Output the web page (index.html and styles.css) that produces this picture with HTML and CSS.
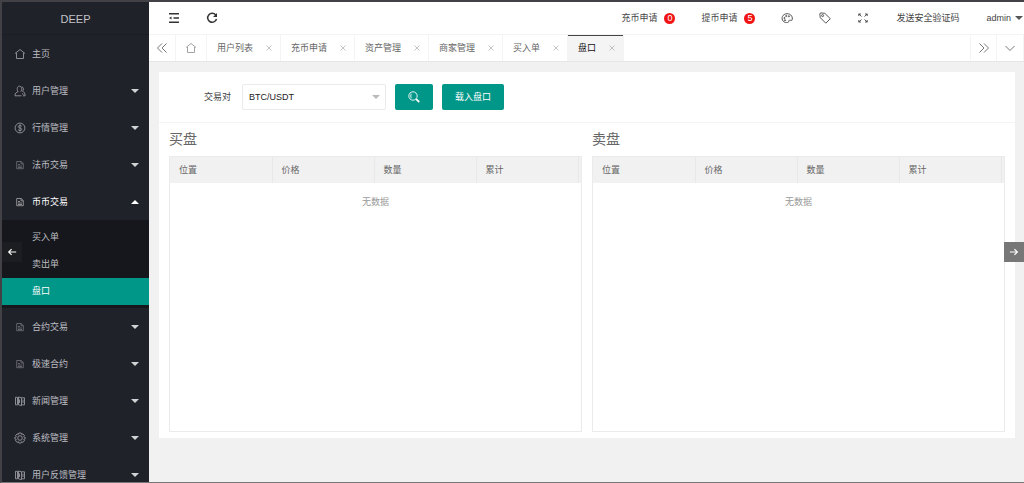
FILE: index.html
```html
<!DOCTYPE html>
<html lang="zh-CN">
<head>
<meta charset="utf-8">
<meta name="viewport" content="width=device-width, initial-scale=1">
<title>DEEP</title>
<link rel="stylesheet" href="styles.css">
</head>
<body>
<svg class="defs" aria-hidden="true">
  <symbol id="home" viewBox="0 0 12 12"><path d="M1 5.500 6 1.500l5 4M2.500 5v5.500h7V5"/></symbol>
  <symbol id="user" viewBox="0 0 12 12"><path d="M4.200 6.700C2.800 5.600 2.600 1.200 5.400 1.200s2.700 4.400 1.200 5.500M4.200 6.700C2.200 7.300 1 8.200 1 10.800h6.500M7.800 1.800c2 .3 2 3.500.7 4.500 1.600.6 2.600 1.700 2.600 4.500H9M8 8.500l1.500 1"/></symbol>
  <symbol id="dollar" viewBox="0 0 12 12"><circle cx="6" cy="6" r="4.900"/><path d="M7.800 4.200C7 3.100 4.300 3.200 4.300 4.700c0 1.600 3.500 1 3.500 2.700 0 1.500-2.800 1.600-3.700.3M6 2.400v7.200"/></symbol>
  <symbol id="doc" viewBox="0 0 12 12"><path d="M2.700 2.500h4.500L9.300 4.500V9.700H2.700zM7 2.500v2.300h2.300M4 5.500h2M4 7h4M4 8.500h4"/></symbol>
  <symbol id="book" viewBox="0 0 12 12"><path d="M1.500 2.300h2v7.500h-2zM4.500 2l3 .8v7.800l-3-.8zM7.500 2.800h3v7h-3M5.500 4.500v3.500M9 4.500v3.500"/></symbol>
  <symbol id="gear" viewBox="0 0 12 12"><path d="M4.800 1h2.400l.4 1.400 1.400-.5 1.500 1.800-.8 1.100 1.500.7v1.400l-1.500.600.8 1.300L8.900 10.300l-1.300-.6L7.200 11H4.800l-.4-1.300-1.300.6-1.600-1.500.8-1.300L.8 6.900V5.500l1.500-.7-.8-1.100L3 1.900l1.400.5z"/><circle cx="6" cy="6" r="2.300"/></symbol>
  <symbol id="fold" viewBox="0 0 12 12"><path d="M1 1.800h10M5.500 6H11M1 10.200h10"/><path class="solid" d="M1 6l2.500-1.500v3z"/></symbol>
  <symbol id="reload" viewBox="0 0 12 12"><path d="M9.700 3A4.500 4.500 0 1 0 10.500 7"/><path class="solid" d="M11 1v4H7z"/></symbol>
  <symbol id="palette" viewBox="0 0 12 12"><path d="M2.500 9.500C-.5 6.500 1.500 1.800 6 1.700c4.200 0 6.200 3.500 5 6.500-.8.7-1.600-.2-2.600 0-1.200.5 0 2-1.700 2.300-1.500.2-3.200-.1-4.200-1z"/><circle cx="3.500" cy="6" r=".6"/><circle cx="5.200" cy="4" r=".6"/><circle cx="7.900" cy="4.300" r=".6"/><circle cx="4" cy="8.300" r=".6"/></symbol>
  <symbol id="tag" viewBox="0 0 12 12"><path d="M.8 2 1.500.9 5.800 1.300l5.500 5.400-4.500 4.500L1.300 5.700z"/><circle cx="3.600" cy="3.600" r="1"/></symbol>
  <symbol id="full" viewBox="0 0 12 12"><path d="M1.800 4V2H4M1.800 2l2.700 2.500M8 2h2.200v2M10.200 2 7.500 4.500M1.800 8v2H4M1.800 10l2.700-2.500M8 10h2.200V8M10.200 10 7.500 7.500"/></symbol>
  <symbol id="left2" viewBox="0 0 12 12"><path d="M6 1.500 1.500 6 6 10.500M10.500 1.500 6 6l4.500 4.500"/></symbol>
  <symbol id="right2" viewBox="0 0 12 12"><path d="M1.500 1.500 6 6l-4.500 4.500M6 1.500 10.500 6 6 10.500"/></symbol>
  <symbol id="down" viewBox="0 0 12 12"><path d="M1.500 4 6 8.500 10.500 4"/></symbol>
  <symbol id="close" viewBox="0 0 12 12"><path d="m1 1 10 10M11 1 1 11"/></symbol>
  <symbol id="search" viewBox="0 0 12 12"><circle cx="5" cy="5" r="4.200"/><path d="M3.500 2.800c-1 1-1 3.400 0 4.400"/><path class="thick" d="m8.200 8.200 3 2.800"/></symbol>
  <symbol id="caret" viewBox="0 0 8 4"><path class="solid" d="M0 0h8L4 4z"/></symbol>
  <symbol id="arrow-left" viewBox="0 0 12 12"><path d="M11 6H2M5.500 2.500 2 6l3.500 3.500"/></symbol>
  <symbol id="arrow-right" viewBox="0 0 12 12"><path d="M1 6h9M6.500 2.500 10 6 6.500 9.500"/></symbol>
</svg>
<div class="app">
  <aside class="side">
    <div class="logo">DEEP</div>
    <nav>
      <a class="item" href="#"><svg class="icon"><use href="#home"/></svg><span>主页</span></a>
      <a class="item" href="#"><svg class="icon"><use href="#user"/></svg><span>用户管理</span><svg class="caret"><use href="#caret"/></svg></a>
      <a class="item" href="#"><svg class="icon"><use href="#dollar"/></svg><span>行情管理</span><svg class="caret"><use href="#caret"/></svg></a>
      <a class="item" href="#"><svg class="icon dim"><use href="#doc"/></svg><span>法币交易</span><svg class="caret"><use href="#caret"/></svg></a>
      <a class="item open" href="#"><svg class="icon"><use href="#doc"/></svg><span>币币交易</span><svg class="caret"><use href="#caret"/></svg></a>
      <div class="sub">
        <a href="#">买入单</a>
        <a href="#">卖出单</a>
        <a class="current" href="#">盘口</a>
      </div>
      <a class="item" href="#"><svg class="icon dim"><use href="#doc"/></svg><span>合约交易</span><svg class="caret"><use href="#caret"/></svg></a>
      <a class="item" href="#"><svg class="icon dim"><use href="#doc"/></svg><span>极速合约</span><svg class="caret"><use href="#caret"/></svg></a>
      <a class="item" href="#"><svg class="icon"><use href="#book"/></svg><span>新闻管理</span><svg class="caret"><use href="#caret"/></svg></a>
      <a class="item" href="#"><svg class="icon"><use href="#gear"/></svg><span>系统管理</span><svg class="caret"><use href="#caret"/></svg></a>
      <a class="item" href="#"><svg class="icon"><use href="#book"/></svg><span>用户反馈管理</span><svg class="caret"><use href="#caret"/></svg></a>
    </nav>
  </aside>
  <div class="main">
    <header class="top">
      <div class="tools">
        <button aria-label="收起菜单"><svg class="icon strong"><use href="#fold"/></svg></button>
        <button aria-label="刷新"><svg class="icon strong"><use href="#reload"/></svg></button>
      </div>
      <div class="links">
        <a href="#">充币申请<span class="badge">0</span></a>
        <a href="#">提币申请<span class="badge">5</span></a>
        <button aria-label="主题"><svg class="icon"><use href="#palette"/></svg></button>
        <button aria-label="便签"><svg class="icon"><use href="#tag"/></svg></button>
        <button aria-label="全屏"><svg class="icon"><use href="#full"/></svg></button>
        <a class="send" href="#">发送安全验证码</a>
        <a class="account" href="#">admin<svg class="caret"><use href="#caret"/></svg></a>
      </div>
    </header>
    <div class="tabs">
      <button class="ctl" aria-label="向左"><svg class="icon"><use href="#left2"/></svg></button>
      <button class="ctl home" aria-label="主页"><svg class="icon"><use href="#home"/></svg></button>
      <div class="tab"><a href="#">用户列表</a><button aria-label="关闭"><svg class="x"><use href="#close"/></svg></button></div>
      <div class="tab"><a href="#">充币申请</a><button aria-label="关闭"><svg class="x"><use href="#close"/></svg></button></div>
      <div class="tab"><a href="#">资产管理</a><button aria-label="关闭"><svg class="x"><use href="#close"/></svg></button></div>
      <div class="tab"><a href="#">商家管理</a><button aria-label="关闭"><svg class="x"><use href="#close"/></svg></button></div>
      <div class="tab"><a href="#">买入单</a><button aria-label="关闭"><svg class="x"><use href="#close"/></svg></button></div>
      <div class="tab active"><a href="#">盘口</a><button aria-label="关闭"><svg class="x"><use href="#close"/></svg></button></div>
      <button class="ctl next" aria-label="向右"><svg class="icon"><use href="#right2"/></svg></button>
      <button class="ctl" aria-label="更多"><svg class="icon"><use href="#down"/></svg></button>
    </div>
    <main class="card">
      <form class="filter">
        <label for="pair">交易对</label>
        <div class="select"><select id="pair"><option>BTC/USDT</option></select><svg class="caret"><use href="#caret"/></svg></div>
        <button class="btn search" type="button" aria-label="搜索"><svg class="icon"><use href="#search"/></svg></button>
        <button class="btn" type="button">载入盘口</button>
      </form>
      <div class="books">
        <section>
          <h2>买盘</h2>
          <div class="box">
            <table>
              <thead><tr><th>位置</th><th>价格</th><th>数量</th><th>累计</th><td class="gutter"></td></tr></thead>
              <tbody><tr><td class="empty" colspan="5">无数据</td></tr></tbody>
            </table>
          </div>
        </section>
        <section>
          <h2>卖盘</h2>
          <div class="box">
            <table>
              <thead><tr><th>位置</th><th>价格</th><th>数量</th><th>累计</th><td class="gutter"></td></tr></thead>
              <tbody><tr><td class="empty" colspan="5">无数据</td></tr></tbody>
            </table>
          </div>
        </section>
      </div>
    </main>
  </div>
  <button class="slide prev" aria-label="上一张"><svg class="icon"><use href="#arrow-left"/></svg></button>
  <button class="slide following" aria-label="下一张"><svg class="icon"><use href="#arrow-right"/></svg></button>
</div>
</body>
</html>
```
FILE: styles.css
```css
* { box-sizing: border-box; }
body {
  margin: 0;
  font: 9px/14px "Liberation Sans", "Noto Sans CJK SC", sans-serif;
  color: #555;
}
a { color: inherit; text-decoration: none; }
button {
  display: flex;
  align-items: center;
  justify-content: center;
  padding: 0;
  border: 0;
  background: none;
  color: inherit;
  font: inherit;
}
svg { display: block; flex: none; }
.defs { position: absolute; width: 0; height: 0; }
.icon { width: 12px; height: 12px; }
.icon, .x { fill: none; stroke: currentColor; stroke-width: 0.9; }
.strong { stroke-width: 1.5; color: #333; }
.solid { fill: currentColor; stroke: none; }
.thick { stroke-width: 1.8; }
.caret { width: 8px; height: 4px; }

.app {
  position: relative;
  display: flex;
  height: 100vh;
  overflow: hidden;
  border: solid #414146;
  border-width: 2px 0 1px 2px;
  border-bottom-color: #777;
  background: #f1f1f1;
}

.side { width: 147px; flex: none; overflow: hidden; background: #20222a; color: #bcbdc0; }
.logo {
  height: 33px;
  line-height: 34px;
  font-size: 11px;
  text-align: center;
  color: #c5c5c8;
  border-bottom: 1px solid #1b1d24;
}
.item { display: flex; align-items: center; height: 37px; padding: 0 10px 0 12px; }
.item .icon { margin-right: 6px; color: #97989d; }
.item .dim { color: #6a6c72; }
.item .caret { margin-left: auto; color: #d2d3d4; }
.item.open { color: #fff; }
.open .caret { color: #fff; transform: rotate(180deg); }
.sub { padding: 4px 0 3px; background: #16171c; }
.sub a { display: block; padding-left: 30px; line-height: 27px; }
.sub .current { background: #009688; color: #fff; }

.main { flex: 1; min-width: 0; }
.top {
  display: flex;
  justify-content: space-between;
  height: 33px;
  padding: 0 1px 0 19px;
  background: #fff;
  border-bottom: 1px solid #f4f4f4;
  color: #444;
}
.tools, .links { display: flex; align-items: center; gap: 26px; }
.links a { display: flex; align-items: center; white-space: nowrap; }
.links .send { padding: 0 1px; }
.badge {
  width: 11px;
  height: 11px;
  margin-left: 7px;
  border-radius: 50%;
  background: #f01414;
  color: #fff;
  line-height: 11px;
  text-align: center;
}
.account .caret { margin-left: 4px; color: #555; }

.tabs { display: flex; height: 27px; background: #fff; border-bottom: 1px solid #e6e6e6; color: #666; }
.ctl { width: 27px; flex: none; border-right: 1px solid #f4f4f4; }
.ctl.home { width: 31px; color: #999; }
.ctl.next { margin-left: auto; border-left: 1px solid #f4f4f4; }
.tab { display: flex; align-items: center; gap: 13px; padding: 0 8px 0 10px; border-right: 1px solid #f4f4f4; white-space: nowrap; }
.tab.active { background: #f4f4f4; color: #111; box-shadow: inset 0 1px #444; }
.x { width: 6px; height: 6px; color: #aaa; stroke-width: 1.4; }

.card { margin: 10px 9px 0 10px; background: #fff; }
.filter { display: flex; align-items: center; height: 51px; padding: 0 10px 0 45px; border-bottom: 1px solid #f4f4f4; }
.filter label { width: 38px; color: #444; }
.select { position: relative; width: 144px; }
.select select {
  width: 100%;
  height: 26px;
  padding: 0 6px;
  border: 1px solid #ebebeb;
  border-radius: 2px;
  background: #fff;
  color: #222;
  font: inherit;
  appearance: none;
}
.select .caret { position: absolute; right: 6px; top: 11px; color: #bbb; pointer-events: none; }
.btn { height: 26px; margin-left: 9px; padding: 0 13px; border-radius: 2px; background: #009688; color: #fff; }

.books { display: grid; grid-template-columns: 1fr 1fr; gap: 10px; padding: 0 10px 6px; }
h2 { margin: 0; padding: 6px 0 7px; font-size: 14px; line-height: 20px; font-weight: 400; color: #666; }
.box { min-height: 276px; border: 1px solid #ebebeb; }
table { width: 100%; border-collapse: collapse; table-layout: fixed; }
thead { background: #f1f1f1; }
th { height: 26px; padding: 0 9px; border-right: 1px solid #e8e8e8; font-weight: 400; text-align: left; color: #666; }
.gutter { width: 3px; padding: 0; }
.empty { padding: 12px 0; text-align: center; color: #999; }

.slide { position: absolute; top: 50%; width: 20px; height: 20px; color: #fff; }
.slide .icon { width: 10px; height: 10px; stroke-width: 1.4; }
.prev { left: 0; background: #1c1d20; }
.following { right: 0; background: #777; }
```
